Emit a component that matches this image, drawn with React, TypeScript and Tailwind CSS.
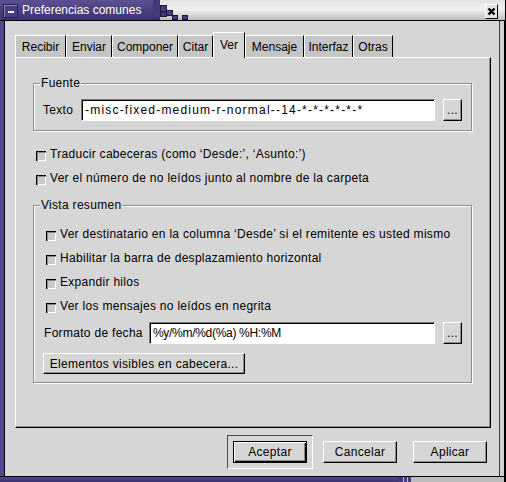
import React from "react";

const tabs = [
  { label: "Recibir", w: "w-[51px]" },
  { label: "Enviar", w: "w-[46px]" },
  { label: "Componer", w: "w-[66px]" },
  { label: "Citar", w: "w-[35px]" },
  { label: "Ver", w: "w-[32px]", active: true },
  { label: "Mensaje", w: "w-[59px]" },
  { label: "Interfaz", w: "w-[49px]" },
  { label: "Otras", w: "w-[40px]" },
];

const raised =
  "border border-t-white border-l-white border-r-black border-b-black shadow-[inset_-1px_-1px_0_#8c8c8c]";

function Check({ label }: { label: string }) {
  return (
    <div className="flex items-center h-[24px]">
      <span className="w-[10px] h-[10px] mt-[3px] shrink-0 bg-[#cbcbcb] shadow-[inset_1px_1px_0_#000,inset_2px_2px_0_#8a8a8a,inset_-1px_-1px_0_#fff]" />
      <span className="ml-[4px]">{label}</span>
    </div>
  );
}

function Field({ value, w, track }: { value: string; w: string; track: string }) {
  return (
    <input
      readOnly
      value={value}
      className={`${w} ${track} h-[22px] shrink-0 bg-white border border-t-[#7a7a7a] border-l-[#7a7a7a] border-b-white border-r-white shadow-[inset_1px_1px_0_#000] pl-[3px] text-[12px] outline-none font-['Liberation_Sans',Arial,sans-serif]`}
    />
  );
}

function Group({ title, children }: { title: string; children: React.ReactNode }) {
  return (
    <fieldset className="border border-[#8e8e8e] shadow-[inset_1px_1px_0_#fff,1px_1px_0_#fff]">
      <legend className="ml-[6px] px-[1px] leading-[14px] bg-[#d6d6d6]">{title}</legend>
      {children}
    </fieldset>
  );
}

function TitleBar() {
  return (
    <div className="h-[21px] flex border-b border-black shrink-0 tracking-normal">
      <div className="w-[153px] flex items-start pl-[3px] bg-gradient-to-b from-[#5d4f93] to-[#3d3270]">
        <div className="mt-[4px] w-[15px] h-[14px] border border-[#2a2150] shadow-[inset_1px_1px_0_#8d80c4] bg-[#4a3d80] flex items-end justify-center pb-[4px]">
          <span className="w-[6px] h-[2px] bg-white" />
        </div>
        <span className="ml-[4px] mt-[3px] text-white text-[12px] leading-[14px]">
          Preferencias comunes
        </span>
      </div>
      <svg width="40" height="20" viewBox="0 0 40 20" className="shrink-0 bg-gradient-to-b from-[#e2e2e2] via-[#efefef] to-[#bdbdbd]">
        <rect x="0" y="0" width="7" height="20" fill="#44387a" />
        <rect x="0" y="17" width="7" height="3" fill="#3a2f6c" />
        <rect x="7.5" y="5.5" width="6" height="6" fill="#4a3d82" stroke="#1e1840" />
        <rect x="7.5" y="11.5" width="6" height="5" fill="#3f3475" stroke="#1e1840" />
        <rect x="13.5" y="10.5" width="6" height="5" fill="#4a3d82" stroke="#1e1840" />
        <rect x="19.5" y="15.5" width="5" height="4" fill="#4a3d82" stroke="#1e1840" />
        <rect x="29.5" y="15.5" width="5" height="4" fill="#4a3d82" stroke="#1e1840" />
      </svg>
      <div className="flex-1 flex justify-end items-start pr-[7px] bg-gradient-to-b from-[#e2e2e2] via-[#efefef] to-[#bdbdbd] border-r border-r-black">
        <div className="mt-[4px] w-[13px] h-[15px] bg-[#e4e4e4] border border-t-white border-l-white border-r-black border-b-black flex items-center justify-center">
          <svg width="9" height="9" viewBox="0 0 9 9">
            <path d="M1.5 1.5 L7.5 7.5 M7.5 1.5 L1.5 7.5" stroke="#000" strokeWidth="2.4" />
          </svg>
        </div>
      </div>
    </div>
  );
}

export default function App() {
  return (
    <div className="w-[506px] h-[482px] flex flex-col overflow-hidden bg-[#d6d6d6] font-['Liberation_Sans',Arial,sans-serif] text-[12px] leading-[14px] tracking-[0.3px] text-black select-none">
      <TitleBar />
      <div className="flex-1 flex min-h-0">
        <div className="w-[5px] shrink-0 bg-[#54468c] border-r border-black" />
        <div className="flex-1 flex flex-col pt-[11px] pl-[10px] pr-[8px]">
          {/* Tabs */}
          <div className="flex items-end h-[25px] tracking-normal">
            {tabs.map((t) =>
              t.active ? (
                <div
                  key={t.label}
                  className={`${t.w} h-[26px] -mb-px relative z-10 bg-[#d6d6d6] border-l border-t border-white border-r border-r-black flex items-center justify-center pb-[2px]`}
                >
                  {t.label}
                </div>
              ) : (
                <div
                  key={t.label}
                  className={`${t.w} h-[22px] bg-[#c5c5c5] border-l border-t border-white border-r border-r-black flex items-center justify-center`}
                >
                  {t.label}
                </div>
              )
            )}
          </div>

          {/* Panel */}
          <div className="h-[371px] flex flex-col border border-t-white border-l-white border-r-black border-b-black shadow-[inset_-1px_-1px_0_#8c8c8c] pl-[17px] pr-[18px] pt-[18px]">
            <Group title="Fuente">
              <div className="flex items-center px-[9px] pt-[9px] pb-[9px]">
                <span className="flex-1">Texto</span>
                <Field w="w-[354px]" track="tracking-[1.2px]" value="-misc-fixed-medium-r-normal--14-*-*-*-*-*-*" />
                <button className={`ml-[8px] w-[19px] h-[22px] shrink-0 ${raised} flex items-center justify-center`}>
                  ...
                </button>
              </div>
            </Group>

            <div className="mt-[11px] ml-[3px]">
              <Check label="Traducir cabeceras (como ‘Desde:’, ‘Asunto:’)" />
              <Check label="Ver el número de no leídos junto al nombre de la carpeta" />
            </div>

            <div className="mt-[8px]">
              <Group title="Vista resumen">
                <div className="flex flex-col px-[9px] pt-[10px] pb-[8px]">
                  <div className="ml-[3px]">
                    <Check label="Ver destinatario en la columna ‘Desde’ si el remitente es usted mismo" />
                    <Check label="Habilitar la barra de desplazamiento horizontal" />
                    <Check label="Expandir hilos" />
                    <Check label="Ver los mensajes no leídos en negrita" />
                  </div>
                  <div className="flex items-center mt-[4px]">
                    <span className="flex-1 ml-[1px]">Formato de fecha</span>
                    <Field w="w-[286px]" track="tracking-[-0.3px]" value="%y/%m/%d(%a) %H:%M" />
                    <button className={`ml-[8px] w-[19px] h-[22px] shrink-0 ${raised} flex items-center justify-center`}>
                      ...
                    </button>
                  </div>
                  <button className={`mt-[9px] self-start w-[202px] h-[21px] ${raised} flex items-center justify-center`}>
                    Elementos visibles en cabecera...
                  </button>
                </div>
              </Group>
            </div>
          </div>

          {/* Buttons */}
          <div className="flex justify-end gap-[16px] mt-[13px] pr-[4px]">
            <div className="-m-[6px] p-[5px] border border-t-[#4a4a4a] border-l-[#4a4a4a] border-b-white border-r-white">
              <button className="w-[74px] h-[22px] border border-black shadow-[inset_1px_1px_0_#fff,inset_-1px_-1px_0_#000,inset_-2px_-2px_0_#8a8a8a] flex items-center justify-center">
                Aceptar
              </button>
            </div>
            <button className={`w-[74px] h-[22px] ${raised} flex items-center justify-center`}>Cancelar</button>
            <button className={`w-[74px] h-[22px] ${raised} flex items-center justify-center`}>Aplicar</button>
          </div>
        </div>
        <div className="w-[7px] shrink-0 border-l border-[#3a3a3a] border-r-2 border-r-black bg-[#cfcfcf]" />
      </div>

      {/* Bottom frame */}
      <div className="h-[6px] shrink-0 flex border-t border-black">
        <div className="w-[398px] bg-gradient-to-b from-[#54468c] to-[#3d3270]" />
        <svg width="16" height="5" viewBox="0 0 16 5" className="shrink-0 bg-[#bdbdbd]">
          <rect x="0" y="0" width="5" height="5" fill="#44387a" />
          <rect x="6" y="0" width="3" height="5" fill="#4a3d82" />
          <rect x="10" y="0" width="3" height="5" fill="#4a3d82" />
        </svg>
        <div className="flex-1 bg-[#bdbdbd] border-r-2 border-black" />
      </div>
    </div>
  );
}
